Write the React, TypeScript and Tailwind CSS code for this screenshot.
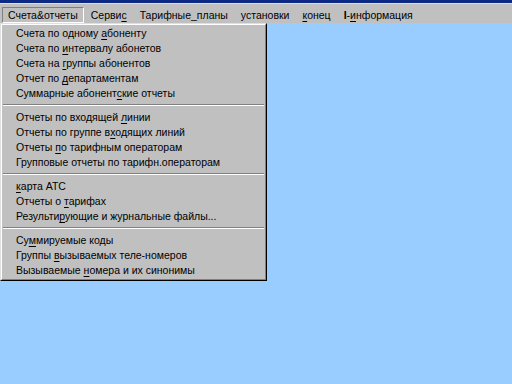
import React from 'react'

// label split as [before, mnemonic letter, after]
type Label = [string, string, string]

const MENU_BAR: Array<{ label: Label; active?: boolean; bold?: boolean }> = [
  { label: ['Счета&отчеты', '', ''], active: true },
  { label: ['Серви', 'с', ''] },
  { label: ['Тарифные_планы', '', ''] },
  { label: ['установки', '', ''] },
  { label: ['', 'к', 'онец'] },
  { label: ['I-', 'и', 'нформация'], bold: true }
]

const GROUPS: Label[][] = [
  [
    ['Счета по одному ', 'а', 'боненту'],
    ['Счета по ', 'и', 'нтервалу абонетов'],
    ['Счета на ', 'г', 'руппы абонентов'],
    ['Отчет по ', 'д', 'епартаментам'],
    ['Суммарные абонент', 'с', 'кие отчеты']
  ],
  [
    ['Отчеты по входящей ', 'л', 'инии'],
    ['Отчеты по группе в', 'х', 'одящих линий'],
    ['Отчеты ', 'п', 'о тарифным операторам'],
    ['Групповые отчеты по тарифн.операторам', '', '']
  ],
  [
    ['', 'к', 'арта АТС'],
    ['Отчеты о ', 'т', 'арифах'],
    ['Результи', 'р', 'ующие и журнальные файлы...']
  ],
  [
    ['Су', 'м', 'мируемые коды'],
    ['Группы ', 'в', 'ызываемых теле-номеров'],
    ['Вызываемые ', 'н', 'омера и их синонимы']
  ]
]

function Mnemonic({ label }: { label: Label }) {
  const [a, m, b] = label
  return (
    <span className="whitespace-pre">
      {a}
      {m && <span className="underline decoration-1 underline-offset-[2px]">{m}</span>}
      {b}
    </span>
  )
}

export default function App() {
  return (
    <div
      className="relative w-[512px] h-[384px] overflow-hidden bg-[#99ccff] text-[10.5px] text-black"
      style={{ fontFamily: '"Liberation Sans", Arial, sans-serif' }}
    >
      {/* window title remnant */}
      <div className="h-[3px] bg-[#0c2a84]" />

      {/* menu bar */}
      <div className="h-[20px] bg-[#c0c0c0] border-t border-[#dfdfdf] flex items-end pl-[2px]">
        {MENU_BAR.map(({ label, active, bold }, i) => (
          <div
            key={i}
            className={`h-[16px] px-[5px] mr-[1px] leading-[15px] border ${
              active ? 'border-t-[#808080] border-l-[#808080] border-b-white border-r-white' : 'border-transparent'
            }`}
          >
            {bold ? (
              <span className="whitespace-pre">
                <span className="font-bold">{label[0].slice(0, 1)}</span>
                {label[0].slice(1)}
                <span className="underline decoration-1 underline-offset-[2px]">{label[1]}</span>
                {label[2]}
              </span>
            ) : (
              <Mnemonic label={label} />
            )}
          </div>
        ))}
      </div>

      {/* dropdown */}
      <div className="absolute left-0 top-[23px] w-[267px] bg-[#c0c0c0] border border-t-[#dfdfdf] border-l-[#dfdfdf] border-r-black border-b-black">
        <div className="border border-t-white border-l-white border-r-[#808080] border-b-[#808080] py-[1px]">
          {GROUPS.map((group, gi) => (
            <div key={gi}>
              {gi > 0 && (
                <div className="pt-[3px] pb-[4px] px-[1px]">
                  <div className="border-t border-[#808080] border-b border-b-white" />
                </div>
              )}
              {group.map((label, li) => (
                <div key={li} className="h-[15px] leading-[15px] pl-[14px]">
                  <Mnemonic label={label} />
                </div>
              ))}
            </div>
          ))}
        </div>
      </div>
    </div>
  )
}
